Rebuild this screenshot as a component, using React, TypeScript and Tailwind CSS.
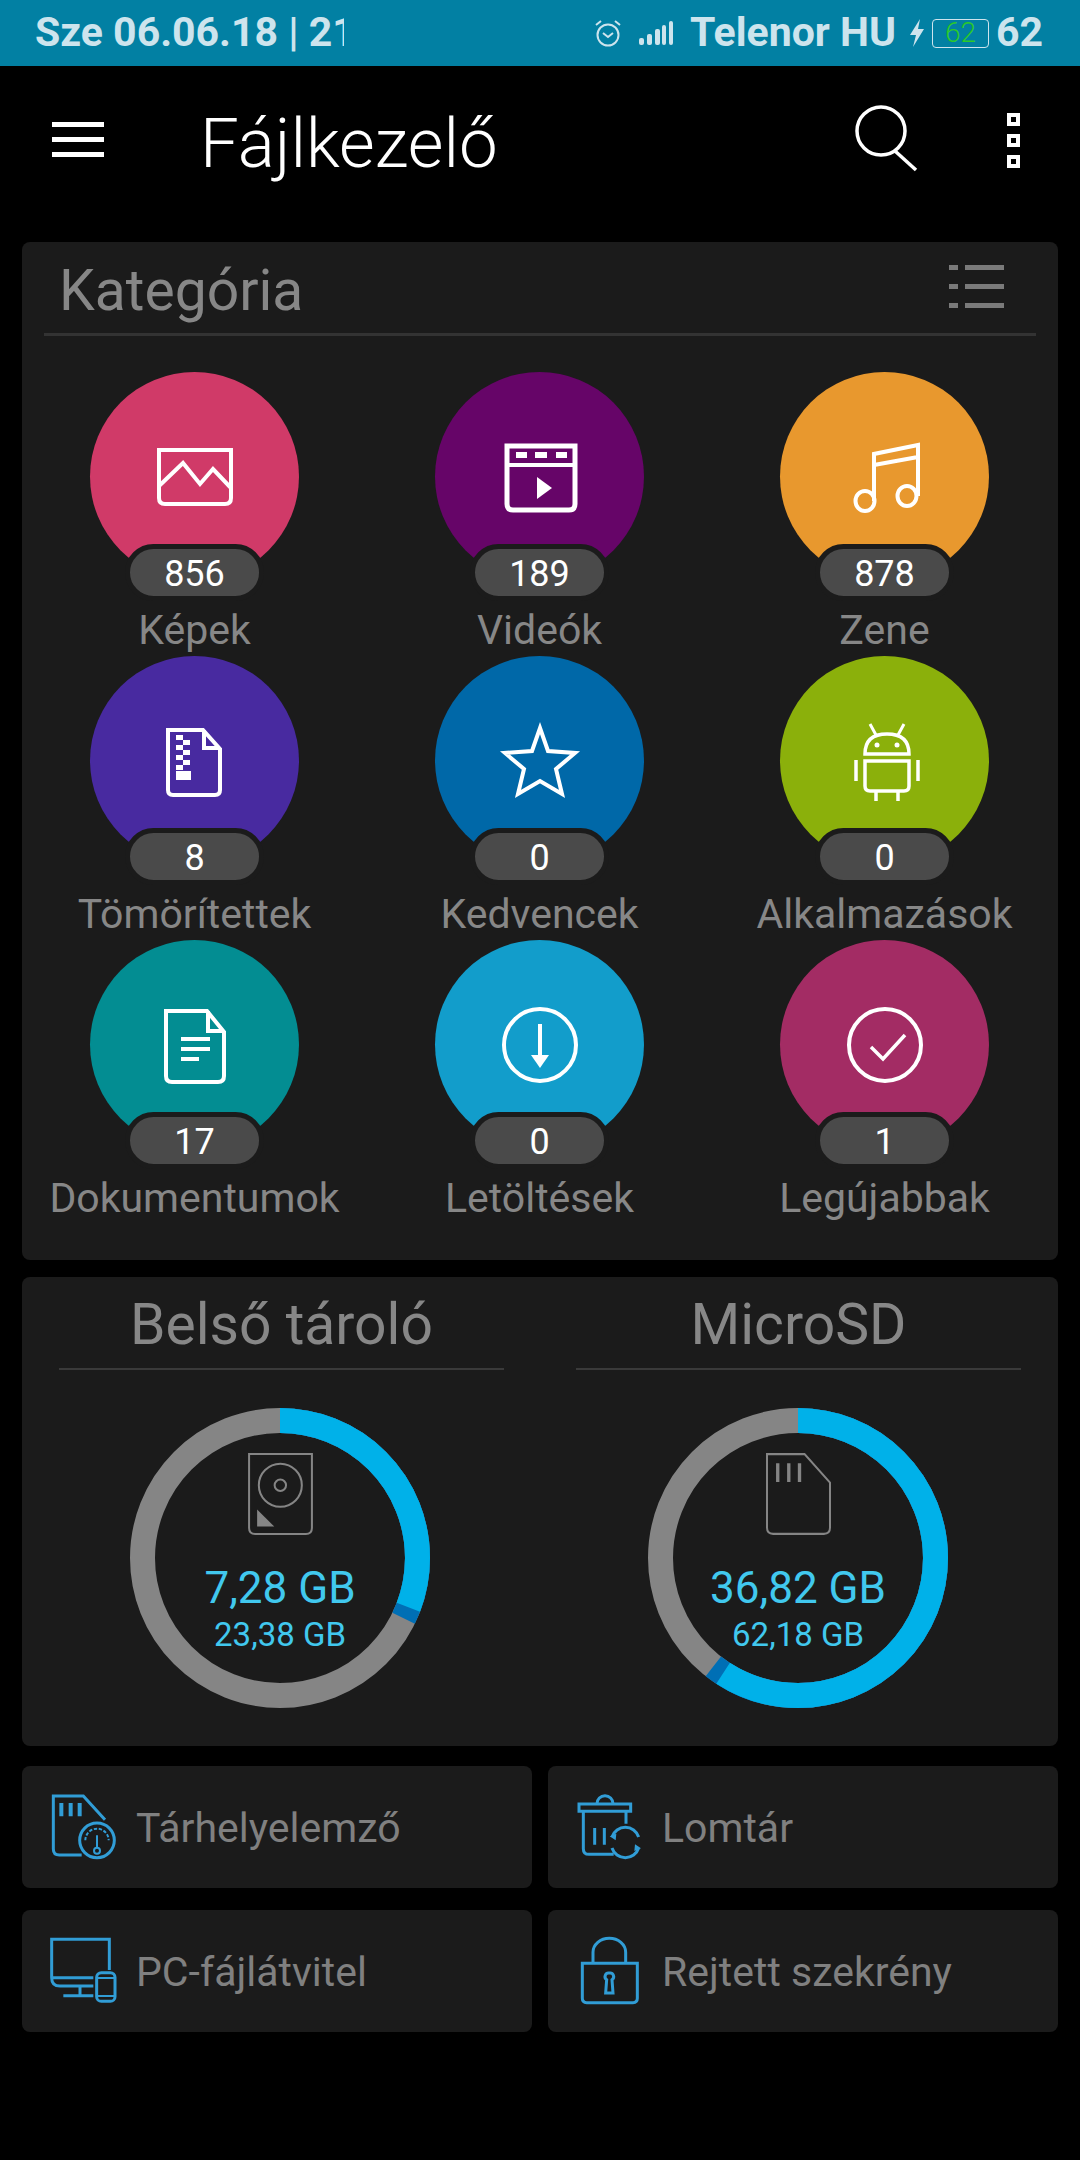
const categories = [
  { name: "Képek", count: "856", color: "bg-[#d03a68]", icon: <ImageIcon /> },
  { name: "Videók", count: "189", color: "bg-[#660568]", icon: <VideoIcon /> },
  { name: "Zene", count: "878", color: "bg-[#e8982e]", icon: <MusicIcon /> },
  { name: "Tömörítettek", count: "8", color: "bg-[#482aa0]", icon: <ZipIcon /> },
  { name: "Kedvencek", count: "0", color: "bg-[#0068a8]", icon: <StarIcon /> },
  { name: "Alkalmazások", count: "0", color: "bg-[#8bb00b]", icon: <AndroidIcon /> },
  { name: "Dokumentumok", count: "17", color: "bg-[#038d92]", icon: <DocIcon /> },
  { name: "Letöltések", count: "0", color: "bg-[#129dcb]", icon: <DownloadIcon /> },
  { name: "Legújabbak", count: "1", color: "bg-[#a32c64]", icon: <CheckIcon /> },
];

function Glyph({ children }: { children: React.ReactNode }) {
  return (
    <svg viewBox="0 0 100 100" className="h-[100px] w-[100px]" fill="none" stroke="white" strokeWidth="4">
      {children}
    </svg>
  );
}

function ImageIcon() {
  return (
    <Glyph>
      <path d="M14 23H86V71q0 6-6 6H20q-6 0-6-6Z" />
      <path d="M14 59L38 36L55 57L68 42L86 61" />
    </Glyph>
  );
}

function VideoIcon() {
  return (
    <Glyph>
      <path d="M17 19H85V77q0 6-6 6H23q-6 0-6-6Z" strokeWidth="5" />
      <path d="M17 38H85" strokeWidth="4" />
      <path d="M26 28H37M45 28H57M66 28H77" strokeWidth="6" />
      <path d="M47 50L62 61L47 72Z" fill="white" stroke="none" />
    </Glyph>
  );
}

function MusicIcon() {
  return (
    <Glyph>
      <ellipse cx="30" cy="74" rx="9.5" ry="10" />
      <ellipse cx="72" cy="69" rx="9.5" ry="10" />
      <path d="M39 74V27L83 18V69M39 38L83 30" />
    </Glyph>
  );
}

function ZipIcon() {
  return (
    <Glyph>
      <path d="M23 19H58L75 38V79q0 5-5 5H28q-5 0-5-5Z" />
      <path d="M59 19V37H75" />
      <path
        d="M31 24H38V29H31ZM38 29H45V34H38ZM31 34H38V39H31ZM38 39H45V44H38ZM31 44H38V49H31ZM38 49H45V54H38ZM31 54H38V59H31ZM31 60H46V69H31Z"
        fill="white"
        stroke="none"
      />
    </Glyph>
  );
}

function StarIcon() {
  return (
    <Glyph>
      <path d="M50 17L58 40L85 42L66 58L72 83L50 70L28 83L34 58L15 42L42 40Z" />
    </Glyph>
  );
}

function AndroidIcon() {
  return (
    <Glyph>
      <path d="M30 43q0-20 22-20t22 20Z" strokeWidth="3.5" />
      <path d="M35 13L41 24M69 13L63 24" strokeWidth="3" />
      <circle cx="42" cy="34" r="2.5" fill="white" stroke="none" />
      <circle cx="62" cy="34" r="2.5" fill="white" stroke="none" />
      <path d="M30 50H74V75q0 5-5 5H35q-5 0-5-5Z" strokeWidth="3.5" />
      <path d="M21 49V70M83 49V70M41 80V90M63 80V90" strokeWidth="3.5" />
    </Glyph>
  );
}

function DocIcon() {
  return (
    <Glyph>
      <path d="M21 16H62L79 37V81q0 6-6 6H27q-6 0-6-6Z" />
      <path d="M63 16V36H79" />
      <path d="M36 44H65M36 54H65M36 64H54" />
    </Glyph>
  );
}

function DownloadIcon() {
  return (
    <Glyph>
      <circle cx="50" cy="50" r="36" />
      <path d="M50 29V62" />
      <path d="M41 60H59L50 73Z" fill="white" stroke="none" />
    </Glyph>
  );
}

function CheckIcon() {
  return (
    <Glyph>
      <circle cx="50" cy="50" r="36" />
      <path d="M36 52L48 64L70 40" strokeWidth="3.5" />
    </Glyph>
  );
}

function CategoryCell({ name, count, color, icon }: { name: string; count: string; color: string; icon: React.ReactNode }) {
  return (
    <div className="flex flex-col items-center">
      <div className={`relative flex h-[209px] w-[209px] items-center justify-center rounded-full ${color}`}>
        {icon}
        <div className="absolute top-[172px] left-[35px] flex h-[57px] w-[139px] items-center justify-center rounded-full border-[5px] border-[#1b1b1b] bg-[#4a4a4a] pt-[3px] text-[36px] leading-none text-white">
          {count}
        </div>
      </div>
      <div className="mt-[25px] text-[41px] leading-[48px] whitespace-nowrap text-[#878787]">{name}</div>
    </div>
  );
}

function Donut({ used, mark, className, children }: { used: number; mark: number; className: string; children: React.ReactNode }) {
  return (
    <div className={`relative mt-[38px] h-[300px] w-[300px] ${className}`}>
      <svg viewBox="0 0 300 300" className="absolute inset-0 -rotate-90" fill="none" strokeWidth="25">
        <circle cx="150" cy="150" r="137.5" stroke="#858585" />
        <circle cx="150" cy="150" r="137.5" stroke="#006fb5" pathLength={360} strokeDasharray={`${mark} 360`} />
        <circle cx="150" cy="150" r="137.5" stroke="#00b1e9" pathLength={360} strokeDasharray={`${used} 360`} />
      </svg>
      <div className="relative flex flex-col items-center pt-[45px] text-[#41c8ee]">{children}</div>
    </div>
  );
}

function HddIcon() {
  return (
    <svg viewBox="445 192 193 244" className="h-[82px] w-[65px]" fill="none" stroke="#858585" strokeWidth="6">
      <path d="M448 195H635V415q0 18-18 18H466q-18 0-18-18Z" />
      <circle cx="541" cy="288" r="64" />
      <circle cx="541" cy="288" r="17" />
      <path d="M472 360V411H523Z" fill="#858585" stroke="none" />
    </svg>
  );
}

function SdIcon() {
  return (
    <svg viewBox="408 192 194 244" className="h-[82px] w-[65px]" fill="none" stroke="#858585" strokeWidth="6">
      <path d="M411 195H523L599 280V415q0 18-18 18H429q-18 0-18-18Z" />
      <path d="M443 222V278M476 222V278M508 222V278" strokeWidth="10" />
    </svg>
  );
}

function StoreIcon() {
  return (
    <svg viewBox="30 35 210 210" className="h-[70px] w-[70px] shrink-0" fill="none" stroke="#319dd6" strokeWidth="9">
      <path d="M125 224H58q-18 0-18-18V47H130L195 118" />
      <path d="M64 68V108M92 68V108M119 68V108" strokeWidth="12" />
      <circle cx="171" cy="180" r="52" />
      <path d="M136 180a35 35 0 0 1 70 0" strokeWidth="6" strokeDasharray="10 5" />
      <path d="M171 165V200" strokeWidth="6" />
      <circle cx="171" cy="211" r="9" strokeWidth="6" />
    </svg>
  );
}

function TrashIcon() {
  return (
    <svg viewBox="20 35 210 210" className="h-[70px] w-[70px] shrink-0" fill="none" stroke="#319dd6" strokeWidth="9">
      <path d="M26 71H181V93H26Z" />
      <path d="M80 70a24 24 0 0 1 48 0" />
      <path d="M39 93V205q0 17 17 17H130M167 93V130M73 143V193M102 143V193" />
      <path d="M125 170a42 42 0 0 1 80 0" />
      <path d="M205 203a42 42 0 0 1 -80 0" />
      <path d="M118 168L138 160L136 180ZM212 204L192 212L194 192Z" fill="#319dd6" stroke="none" />
    </svg>
  );
}

function PcIcon() {
  return (
    <svg viewBox="30 35 210 210" className="h-[70px] w-[70px] shrink-0" fill="none" stroke="#319dd6" strokeWidth="9">
      <path d="M160 185H60q-25 0-25-25V45H208V137" />
      <path d="M38 160H160M120 185V214M70 214H160" />
      <rect x="170" y="145" width="55" height="86" rx="14" />
      <path d="M170 161H225M170 215H225" strokeWidth="6" />
    </svg>
  );
}

function LockIcon() {
  return (
    <svg viewBox="20 35 210 210" className="h-[70px] w-[70px] shrink-0" fill="none" stroke="#319dd6" strokeWidth="9">
      <path d="M36 117H201V222q0 13-13 13H49q-13 0-13-13Z" />
      <path d="M68 117V84a49 42 0 0 1 98 0V117" />
      <path d="M117 146a11 11 0 0 1 8 20L128 206H106L109 166a11 11 0 0 1 8-20Z" />
    </svg>
  );
}

function ToolButton({ label, icon, className }: { label: string; icon: React.ReactNode; className: string }) {
  return (
    <div className={`flex h-[122px] items-center rounded-lg bg-[#1b1b1b] ${className}`}>
      {icon}
      <span className="pt-[3px] text-[41px] whitespace-nowrap text-[#808080]">{label}</span>
    </div>
  );
}

export default function App() {
  return (
    <div className="min-h-[2160px] w-[1080px] bg-black font-['Roboto',sans-serif]">
      <div className="flex h-[66px] items-center bg-[#0280a3] pr-[37px] pl-[35px] text-[41px] font-bold text-[#cde4ed]">
        <div className="w-[309px] overflow-hidden whitespace-nowrap">Sze 06.06.18 | 21</div>
        <svg viewBox="0 0 30 30" className="ml-auto h-[30px] w-[30px]" fill="none" stroke="#cde4ed" strokeWidth="2">
          <circle cx="15" cy="17" r="10.5" />
          <path d="M10 15L15 19L20 15M3 7L8 3M27 7L22 3" />
        </svg>
        <svg viewBox="0 0 36 26" className="ml-[15px] h-[26px] w-[36px]" fill="#cde4ed">
          <rect x="1" y="18" width="5" height="7" rx="2" />
          <rect x="9" y="14" width="5" height="11" rx="2" />
          <rect x="17" y="9" width="5" height="16" rx="2" />
          <rect x="24" y="5" width="4" height="20" rx="2" />
          <rect x="31" y="1" width="4" height="24" rx="2" />
        </svg>
        <span className="ml-[16px] whitespace-nowrap">Telenor HU</span>
        <svg viewBox="0 0 14 28" className="ml-[14px] h-[28px] w-[14px]" fill="#cde4ed">
          <path d="M10 0L0 16H6L3 28L14 10H8Z" />
        </svg>
        <div className="ml-[8px] flex h-[29px] w-[57px] items-center justify-center rounded-[4px] border border-[#cde4ed] text-[28px] leading-none font-light text-[#2bc92b]">
          62
        </div>
        <span className="ml-[7px]">62</span>
      </div>

      <div className="flex h-[176px] items-center">
        <div className="ml-[52px] flex w-[52px] flex-col gap-[10px] pb-[30px]">
          <div className="h-[5px] bg-white" />
          <div className="h-[5px] bg-white" />
          <div className="h-[5px] bg-white" />
        </div>
        <div className="ml-[96px] pb-[22px] text-[69px] leading-none font-light whitespace-nowrap text-white">Fájlkezelő</div>
        <svg viewBox="0 0 70 70" className="mr-[59px] mb-[30px] ml-auto h-[70px] w-[70px]" fill="none" stroke="white" strokeWidth="3.5">
          <circle cx="27" cy="27" r="24" />
          <path d="M41 47L62 66" />
        </svg>
        <div className="mr-[60px] ml-[24px] flex flex-col gap-[8px] pb-[27px]">
          <div className="h-[13px] w-[13px] border-[4px] border-white" />
          <div className="h-[13px] w-[13px] border-[4px] border-white" />
          <div className="h-[13px] w-[13px] border-[4px] border-white" />
        </div>
      </div>

      <div className="mx-[22px] h-[1018px] rounded-lg bg-[#1b1b1b]">
        <div className="mx-[22px] flex h-[94px] items-center justify-between border-b-[3px] border-[#333333] pt-[6px] pr-[32px] pl-[15px]">
          <span className="text-[57px] leading-none text-[#878787]">Kategória</span>
          <div className="flex flex-col gap-[14px] pb-[8px]">
            {[0, 1, 2].map((i) => (
              <div key={i} className="flex gap-[7px]">
                <div className="h-[5px] w-[9px] bg-[#7a7a7a]" />
                <div className="h-[5px] w-[39px] bg-[#7a7a7a]" />
              </div>
            ))}
          </div>
        </div>
        <div className="mt-[36px] grid grid-cols-[345px_345px_345px] auto-rows-[284px]">
          {categories.map((c) => (
            <CategoryCell key={c.name} {...c} />
          ))}
        </div>
      </div>

      <div className="mx-[22px] mt-[17px] grid h-[469px] grid-cols-2 gap-x-[72px] rounded-lg bg-[#1b1b1b] px-[37px]">
        <div>
          <div className="flex h-[93px] items-center justify-center border-b-2 border-[#3a3a3a] pt-[5px] text-[57px] text-[#878787]">Belső tároló</div>
          <Donut used={111} mark={116} className="ml-[71px]">
            <HddIcon />
            <div className="mt-[28px] text-[44px] leading-[50px]">7,28 GB</div>
            <div className="pt-[2px] text-[33px] leading-[40px]">23,38 GB</div>
          </Donut>
        </div>
        <div>
          <div className="flex h-[93px] items-center justify-center border-b-2 border-[#3a3a3a] pt-[5px] text-[57px] text-[#878787]">MicroSD</div>
          <Donut used={213} mark={218} className="ml-[72px]">
            <SdIcon />
            <div className="mt-[28px] text-[44px] leading-[50px]">36,82 GB</div>
            <div className="pt-[2px] text-[33px] leading-[40px]">62,18 GB</div>
          </Donut>
        </div>
      </div>

      <div className="mx-[22px] mt-[20px] grid grid-cols-2 gap-x-[16px] gap-y-[22px]">
        <ToolButton label="Tárhelyelemző" icon={<StoreIcon />} className="gap-[16px] pl-[28px]" />
        <ToolButton label="Lomtár" icon={<TrashIcon />} className="gap-[15px] pl-[29px]" />
        <ToolButton label="PC-fájlátvitel" icon={<PcIcon />} className="gap-[16px] pl-[28px]" />
        <ToolButton label="Rejtett szekrény" icon={<LockIcon />} className="gap-[15px] pl-[29px]" />
      </div>
    </div>
  );
}
